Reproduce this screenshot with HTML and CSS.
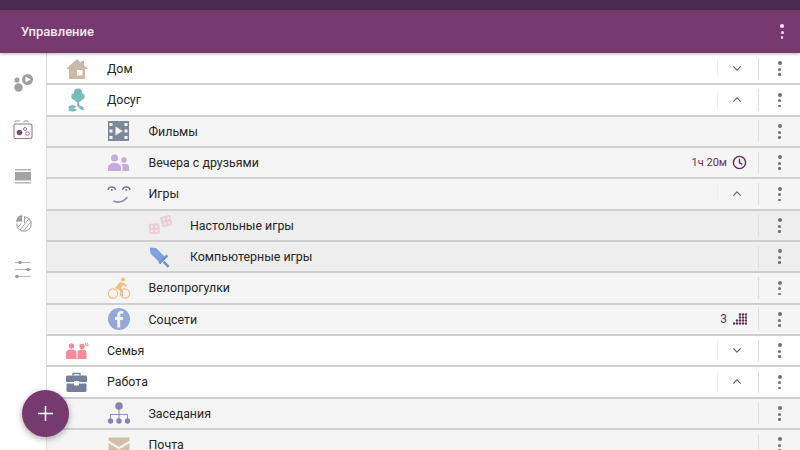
FILE: index.html
```html
<!DOCTYPE html>
<html lang="ru">
<head>
    <meta charset="UTF-8">
    <meta name="viewport" content="width=device-width, initial-scale=1.0">
    <title>Управление</title>
    <link rel="stylesheet" href="styles.css">
</head>
<body>

<div class="status-bar"></div>

<header class="app-bar">
    <h1 class="app-title">Управление</h1>
    <span class="dots dots-light"><i></i><i></i><i></i></span>
</header>

<div class="main">
    <!-- Side navigation -->
    <nav class="side-nav">
        <svg viewBox="0 0 22 22" class="nav-icon">
            <circle cx="5" cy="8" r="2.600" fill="#a0a0a0"/>
            <circle cx="6.500" cy="15.500" r="4.200" fill="#a0a0a0"/>
            <circle cx="15.500" cy="7.500" r="5.500" fill="#a0a0a0"/>
            <path d="M13.500 4.500l5 3-5 3z" fill="#fff"/>
        </svg>
        <svg viewBox="0 0 22 22" class="nav-icon">
            <rect x="2" y="5" width="18" height="14.500" rx="1.500" fill="none" stroke="#9a7597" stroke-width="1.100"/>
            <path d="M3 3.500V2h5M12 3.500V2h4v1.500" fill="none" stroke="#999" stroke-width="1"/>
            <circle cx="7.500" cy="13.500" r="2.800" fill="#7a4a78"/>
            <circle cx="13" cy="10" r="1.500" fill="none" stroke="#9a7597"/>
            <circle cx="15.500" cy="14.500" r="1.800" fill="none" stroke="#9a7597"/>
        </svg>
        <svg viewBox="0 0 22 22" class="nav-icon">
            <rect x="3" y="4" width="16" height="1.500" fill="#b4b4b4"/>
            <rect x="3" y="7" width="16" height="8.500" fill="#a4a4a4"/>
            <rect x="3" y="17" width="16" height="1.500" fill="#b4b4b4"/>
        </svg>
        <svg viewBox="0 0 22 22" class="nav-icon">
            <path d="M10 3A7.500 7.500 0 0 0 4 9.500h6z" fill="#999"/>
            <circle cx="12" cy="12" r="7.300" fill="none" stroke="#a5a5a5" stroke-width="1.100"/>
            <path d="M6 15.500l8-10M8 18l9.500-12M11.500 19l7.500-9.500" stroke="#a5a5a5" stroke-width="1"/>
            <path d="M3 10.800h8.300V3" fill="none" stroke="#fff" stroke-width="1.200"/>
            <path d="M12.500 4.500V11" stroke="#a5a5a5"/>
        </svg>
        <svg viewBox="0 0 22 22" class="nav-icon">
            <path d="M3 4.500h16M3 11.500h16M3 18.500h16" stroke="#b0b0b0" stroke-width=".9"/>
            <circle cx="8" cy="4.500" r="1.700" fill="#999"/>
            <circle cx="16" cy="11.500" r="1.700" fill="#999"/>
            <circle cx="5" cy="18.500" r="1.700" fill="#999"/>
        </svg>
    </nav>

    <!-- Activity tree -->
    <div class="tree">
        <div class="row">
            <svg viewBox="0 0 24 24" class="row-icon">
                <path d="M12 2L1 12h3v10h16V12h3l-4-3.600V4h-3v1.700z" fill="#cdb7a6"/>
                <rect x="12" y="13" width="5.500" height="5.500" fill="#fff"/>
            </svg>
            <span class="row-name">Дом</span>
            <svg viewBox="0 0 12 8" class="chevron"><path d="M1.500 1.500L6 6l4.500-4.500"/></svg>
            <span class="dots"><i></i><i></i><i></i></span>
        </div>
        <div class="row">
            <svg viewBox="0 0 24 24" class="row-icon">
                <g fill="#78bdb5">
                    <circle cx="13" cy="4.500" r="4"/>
                    <circle cx="9.500" cy="8.500" r="3.200"/>
                    <circle cx="16.500" cy="8.500" r="3.200"/>
                    <circle cx="13" cy="10" r="4"/>
                    <path d="M12 13h2v5.500h-2z"/>
                    <path d="M13 17c3 .5 5 1 6.500 5-3 .5-6-1-6.500-5z"/>
                    <ellipse cx="7" cy="19" rx="3.800" ry="1.700" transform="rotate(-10 7 19)"/>
                    <ellipse cx="7.500" cy="22" rx="4" ry="1.400"/>
                </g>
            </svg>
            <span class="row-name">Досуг</span>
            <svg viewBox="0 0 12 8" class="chevron"><path d="M1.500 6.500L6 2l4.500 4.500"/></svg>
            <span class="dots"><i></i><i></i><i></i></span>
        </div>
        <div class="row level-1">
            <svg viewBox="0 0 24 24" class="row-icon">
                <path fill-rule="evenodd" d="M1 2h21v20H1zM2.500 4v3h3V4zM2.500 10.500v3h3v-3zM2.500 17v3h3v-3zM17.500 4v3h3V4zM17.500 10.500v3h3v-3zM17.500 17v3h3v-3zM8.500 7.500v9l7-4.500z" fill="#7d899b"/>
            </svg>
            <span class="row-name">Фильмы</span>
            <span class="dots"><i></i><i></i><i></i></span>
        </div>
        <div class="row level-1">
            <svg viewBox="0 0 24 24" class="row-icon">
                <g fill="#c5abd9">
                    <circle cx="7.500" cy="7" r="3.500"/>
                    <path d="M1 20v-3.500c0-3 3-4.500 6.500-4.500s6.500 1.500 6.500 4.500V20z"/>
                    <circle cx="17" cy="9" r="2.700"/>
                    <path d="M15.500 20v-4c0-1.200-.4-2-1-2.500 2.800-1.500 7.500-.5 7.500 2.500v4z"/>
                </g>
            </svg>
            <span class="row-name">Вечера с друзьями</span>
            <span class="badge">1ч 20м</span>
            <svg viewBox="0 0 16 16" class="clock"><circle cx="8" cy="8" r="6.500"/><path d="M8 4v4.300l3 1.700"/></svg>
            <span class="dots"><i></i><i></i><i></i></span>
        </div>
        <div class="row level-1">
            <svg viewBox="0 0 24 24" class="row-icon">
                <path d="M1 8c.5-4 7-4 7.500 0M15.500 8c.5-4 7-4 7.500 0" fill="none" stroke="#73709f" stroke-width="1.300"/>
                <circle cx="4.800" cy="8" r="1" fill="#73709f"/>
                <circle cx="19.200" cy="8" r="1" fill="#73709f"/>
                <path d="M6.500 19c4.500 2 10 1 14-4" fill="none" stroke="#8f8cc0" stroke-width="1.600"/>
            </svg>
            <span class="row-name">Игры</span>
            <svg viewBox="0 0 12 8" class="chevron"><path d="M1.500 6.500L6 2l4.500 4.500"/></svg>
            <span class="dots"><i></i><i></i><i></i></span>
        </div>
        <div class="row level-2">
            <svg viewBox="0 0 24 24" class="row-icon">
                <g fill="#edcdd8">
                    <rect x="1" y="10.500" width="10.500" height="10.500" rx="1" transform="rotate(-3 6 15)"/>
                    <rect x="13" y="3" width="10.500" height="10.500" rx="1" transform="rotate(-14 18 8)"/>
                </g>
                <g fill="#f6f0f2">
                    <circle cx="3.800" cy="13.500" r="1.100"/><circle cx="8.300" cy="13.500" r="1.100"/><circle cx="3.800" cy="18" r="1.100"/><circle cx="8.300" cy="18" r="1.100"/>
                    <circle cx="16" cy="6" r="1.100"/><circle cx="20.300" cy="5" r="1.100"/><circle cx="17" cy="10.500" r="1.100"/><circle cx="21" cy="9.500" r="1.100"/>
                </g>
            </svg>
            <span class="row-name">Настольные игры</span>
            <span class="dots"><i></i><i></i><i></i></span>
        </div>
        <div class="row level-2">
            <svg viewBox="0 0 24 24" class="row-icon">
                <path d="M2 2.500l6 .5 9 9-5.500 5.500-9-9z" fill="#7f9fe0"/>
                <path d="M10.500 17.500l8-8 1.700 1.700-8 8zM16.500 16l5 5-1.700 1.700-5-5z" fill="#6d8fd6"/>
            </svg>
            <span class="row-name">Компьютерные игры</span>
            <span class="dots"><i></i><i></i><i></i></span>
        </div>
        <div class="row level-1">
            <svg viewBox="0 0 24 24" class="row-icon">
                <circle cx="16" cy="3.500" r="2" fill="#f2bd85"/>
                <path d="M8 12l5-6 4 1 3 3-1 1-3-2-2 3 2 3v5h-1.500v-4l-4-3z" fill="#f2bd85"/>
                <circle cx="6" cy="17.500" r="4.600" fill="none" stroke="#f2bd85" stroke-width="1.100"/>
                <circle cx="18" cy="17.500" r="4.600" fill="none" stroke="#f2bd85" stroke-width="1.100"/>
            </svg>
            <span class="row-name">Велопрогулки</span>
            <span class="dots"><i></i><i></i><i></i></span>
        </div>
        <div class="row level-1">
            <svg viewBox="0 0 24 24" class="row-icon">
                <circle cx="12" cy="12" r="11" fill="#94a9d3"/>
                <path d="M13.200 20.500v-7.500h2.600l.4-3h-3V8.100c0-.9.300-1.500 1.500-1.500h1.600V4c-.4 0-1.200-.1-2.200-.1-2.300 0-3.800 1.400-3.800 3.900V10H8v3h2.300v7.500z" fill="#f4f4f4"/>
            </svg>
            <span class="row-name">Соцсети</span>
            <span class="badge count">3</span>
            <svg viewBox="0 0 14 12" class="grid-dots">
                <g fill="#5e2a57">
                    <circle cx="7" cy="1.500" r="1.200"/><circle cx="10" cy="1.500" r="1.200"/><circle cx="13" cy="1.500" r="1.200"/>
                    <circle cx="7" cy="4.500" r="1.200"/><circle cx="10" cy="4.500" r="1.200"/><circle cx="13" cy="4.500" r="1.200"/>
                    <circle cx="4" cy="7.500" r="1.200"/><circle cx="7" cy="7.500" r="1.200"/><circle cx="10" cy="7.500" r="1.200"/><circle cx="13" cy="7.500" r="1.200"/>
                    <circle cx="1" cy="10.500" r="1.200"/><circle cx="4" cy="10.500" r="1.200"/><circle cx="7" cy="10.500" r="1.200"/><circle cx="10" cy="10.500" r="1.200"/><circle cx="13" cy="10.500" r="1.200"/>
                </g>
            </svg>
            <span class="dots"><i></i><i></i><i></i></span>
        </div>
        <div class="row">
            <svg viewBox="0 0 24 24" class="row-icon">
                <g fill="#f48b9b">
                    <circle cx="6.500" cy="7" r="2.700"/>
                    <path d="M1 20v-6c0-2.500 2-3.500 5.500-3.500s5 1 5 3.500v6z"/>
                    <circle cx="17" cy="7.500" r="2.700"/>
                    <path d="M12.500 20v-6c0-2.500 1.500-3.500 4.500-3.500s4.500 1 4.500 3.500v6z"/>
                </g>
                <path d="M20.500 4l.8 3M22.500 4l.5 3.500" stroke="#d8828f" stroke-width=".9"/>
            </svg>
            <span class="row-name">Семья</span>
            <svg viewBox="0 0 12 8" class="chevron"><path d="M1.500 1.500L6 6l4.500-4.500"/></svg>
            <span class="dots"><i></i><i></i><i></i></span>
        </div>
        <div class="row">
            <svg viewBox="0 0 24 24" class="row-icon">
                <path d="M8 5.500V3.500h7v2" fill="none" stroke="#74809a" stroke-width="1.400"/>
                <path d="M2.500 5.500h18A1.500 1.500 0 0 1 22 7v5H1V7a1.500 1.500 0 0 1 1.500-1.500zM1.500 13.500h20v7a1.500 1.500 0 0 1-1.500 1.500H3a1.500 1.500 0 0 1-1.500-1.500z" fill="#74809a"/>
                <rect x="9" y="11" width="5" height="4.500" fill="#fff"/>
            </svg>
            <span class="row-name">Работа</span>
            <svg viewBox="0 0 12 8" class="chevron"><path d="M1.500 6.500L6 2l4.500 4.500"/></svg>
            <span class="dots"><i></i><i></i><i></i></span>
        </div>
        <div class="row level-1">
            <svg viewBox="0 0 24 24" class="row-icon">
                <circle cx="12" cy="5" r="3.800" fill="#8781b5"/>
                <path d="M12 8v10M3.500 18v-4.500h17V18" fill="none" stroke="#8781b5" stroke-width=".9"/>
                <circle cx="3.500" cy="20" r="2.700" fill="#8781b5"/>
                <circle cx="12" cy="20" r="2.700" fill="#8781b5"/>
                <circle cx="20.500" cy="20" r="2.700" fill="#8781b5"/>
            </svg>
            <span class="row-name">Заседания</span>
            <span class="dots"><i></i><i></i><i></i></span>
        </div>
        <div class="row level-1">
            <svg viewBox="0 0 24 24" class="row-icon">
                <path d="M1.500 4.500h21v3L12 14 1.500 7.500zM1.500 10l10.500 6.500L22.500 10v12h-21z" fill="#d3bfa8"/>
            </svg>
            <span class="row-name">Почта</span>
            <span class="dots"><i></i><i></i><i></i></span>
        </div>
    </div>
</div>

<button class="fab" aria-label="Добавить">
    <svg viewBox="0 0 16 16" class="fab-plus"><path d="M8 0v16M0 8h16"/></svg>
</button>

</body>
</html>
```

FILE: styles.css
```css
body {
    margin: 0;
    width: 800px;
    height: 450px;
    overflow: hidden;
    display: flex;
    flex-direction: column;
    font-family: Roboto, "Noto Sans", sans-serif;
    background: #fff;
    color: #222;
}
.status-bar {
    flex: 0 0 10px;
    background: #4b2b4f;
}
.app-bar {
    flex: 0 0 43px;
    display: flex;
    align-items: center;
    justify-content: space-between;
    padding: 0 13px 0 21px;
    background: #763a6e;
    box-shadow: 0 1px 3px rgba(0, 0, 0, .3);
    position: relative;
    z-index: 1;
}
.app-title {
    margin: 0;
    font-size: 13px;
    font-weight: 500;
    color: #f3e9f2;
}
.main {
    flex: 1;
    display: flex;
    min-height: 0;
}
.side-nav {
    flex: 0 0 47px;
    box-sizing: border-box;
    display: flex;
    flex-direction: column;
    align-items: center;
    gap: 24.5px;
    padding-top: 19px;
    border-right: 1px solid #dcdcdc;
    box-shadow: 1px 0 2px rgba(0, 0, 0, .08);
}
.nav-icon {
    width: 22px;
    height: 22px;
    flex: none;
}
.tree {
    flex: 1;
    min-width: 0;
    display: flex;
    flex-direction: column;
    padding-top: 1px;
}
.row {
    flex: 0 0 31.33px;
    box-sizing: border-box;
    display: flex;
    align-items: center;
    padding-left: 18px;
    border-bottom: 2px solid #cfcfcf;
    background: #fff;
}
.level-1 {
    padding-left: 59.5px;
    background: #f5f5f5;
}
.level-2 {
    padding-left: 101px;
    background: #eeeeee;
}
.row-icon {
    flex: none;
    width: 24px;
    height: 24px;
    margin-right: 18px;
}
.row-name {
    flex: 1;
    font-size: 12.4px;
    color: #262626;
}
.chevron {
    flex: none;
    box-sizing: content-box;
    width: 10px;
    height: 7px;
    padding: 6px 16px 6px 14px;
    border-left: 1px solid #efefef;
    fill: none;
    stroke: #666;
    stroke-width: 1.3;
}
.badge {
    font-size: 11px;
    color: #6a2c60;
    margin-right: 5px;
}
.count {
    font-size: 12px;
    margin-right: 6px;
}
.clock {
    flex: none;
    width: 15px;
    height: 15px;
    margin-right: 11px;
    fill: none;
    stroke: #5e2a57;
    stroke-width: 1.5;
}
.grid-dots {
    flex: none;
    width: 14px;
    height: 12px;
    margin-right: 11px;
}
.dots {
    flex: none;
    box-sizing: border-box;
    width: 42px;
    height: 22px;
    display: flex;
    flex-direction: column;
    align-items: center;
    justify-content: center;
    gap: 2.5px;
    border-left: 1px solid #dedede;
}
.dots i {
    width: 4px;
    height: 4px;
    border-radius: 50%;
    background: #707070;
}
.dots i:nth-child(2) {
    width: 3px;
    height: 3px;
}
.dots i:nth-child(3) {
    width: 2.5px;
    height: 2.5px;
}
.dots-light {
    width: 10px;
    border: 0;
}
.dots-light i {
    background: #f6eef5;
}
.fab {
    position: absolute;
    left: 22px;
    top: 390px;
    width: 47px;
    height: 47px;
    padding: 0;
    border: 0;
    border-radius: 50%;
    display: flex;
    align-items: center;
    justify-content: center;
    background: #763a6e;
    box-shadow: 0 2px 6px rgba(0, 0, 0, .35);
}
.fab-plus {
    width: 15px;
    height: 15px;
    fill: none;
    stroke: #fff;
    stroke-width: 1.6;
}
```
